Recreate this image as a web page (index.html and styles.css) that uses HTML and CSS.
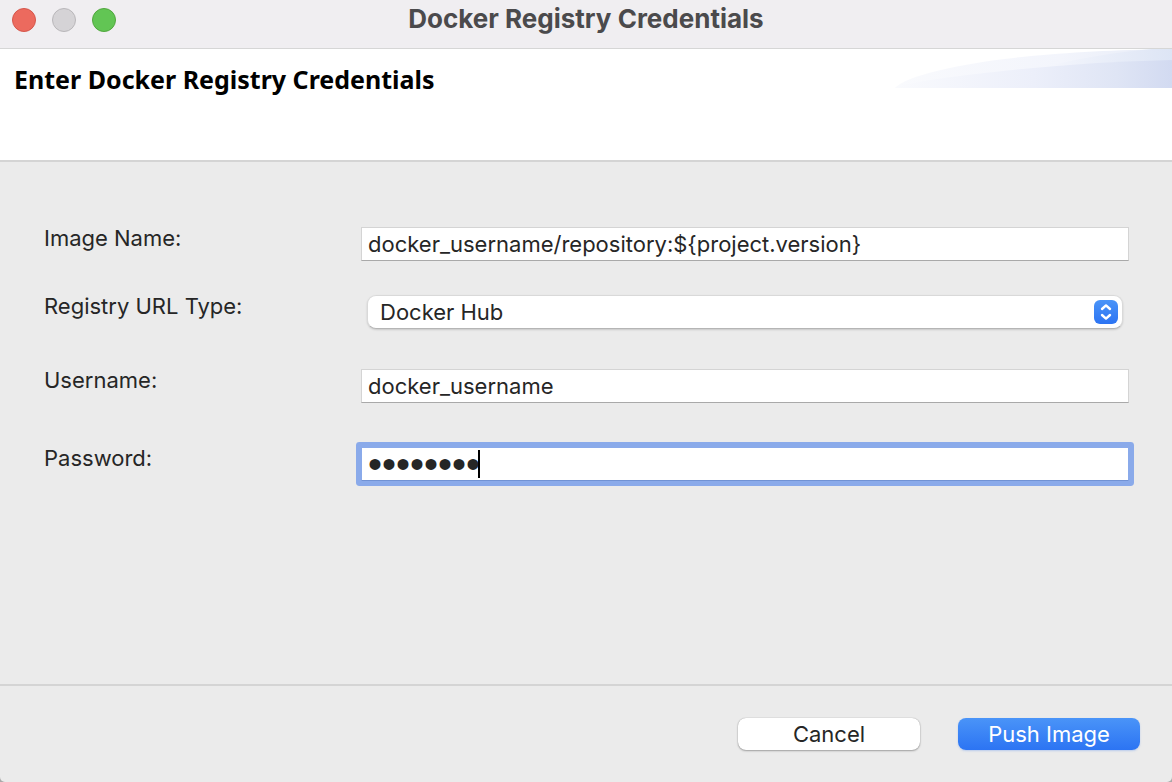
FILE: index.html
```html
<!DOCTYPE html>
<html lang="en">
<head>
<meta charset="utf-8">
<title>Docker Registry Credentials</title>
<link rel="stylesheet" href="styles.css">
</head>
<body>
<form class="dialog">
  <header class="titlebar">
    <div class="lights">
      <button type="button" class="light light-close" aria-label="Close"></button>
      <button type="button" class="light light-minimize" aria-label="Minimize" disabled></button>
      <button type="button" class="light light-zoom" aria-label="Zoom"></button>
    </div>
    <div class="window-title">Docker Registry Credentials</div>
  </header>

  <section class="banner">
    <h1 class="banner-title">Enter Docker Registry Credentials</h1>
    <svg class="banner-art" width="280" height="40" viewBox="0 0 280 40" aria-hidden="true">
      <defs>
        <linearGradient id="swoosh-back" x1="0" x2="1">
          <stop offset="0" stop-color="#f9fafd"/>
          <stop offset="0.6" stop-color="#f3f5fc"/>
          <stop offset="1" stop-color="#e6ebf7"/>
        </linearGradient>
        <linearGradient id="swoosh-mid" x1="0" x2="1">
          <stop offset="0" stop-color="#f3f5fc"/>
          <stop offset="1" stop-color="#dde5f5"/>
        </linearGradient>
        <linearGradient id="swoosh-front" x1="0" x2="1">
          <stop offset="0" stop-color="#f9fafd"/>
          <stop offset="0.5" stop-color="#eceffa"/>
          <stop offset="0.8" stop-color="#dfe5f5"/>
          <stop offset="1" stop-color="#d2daf1"/>
        </linearGradient>
      </defs>
      <path fill="url(#swoosh-back)" d="M3 39C12 27 70 14 130 8C180 3 220 1 280 0V39Z"/>
      <path fill="url(#swoosh-mid)" d="M160 16C195 8 225 3 260 0H280V16Z"/>
      <path fill="url(#swoosh-front)" d="M3 39C20 32 70 26 130 20C180 15 230 12 280 11V39Z"/>
    </svg>
  </section>

  <main class="fields">
    <div class="row">
      <label class="label" for="image-name">Image Name:</label>
      <input class="input" id="image-name" type="text" value="docker_username/repository:${project.version}">
    </div>
    <div class="row row-select">
      <label class="label" for="url-type">Registry URL Type:</label>
      <div class="select-box">
        <select class="select" id="url-type">
          <option>Docker Hub</option>
        </select>
        <svg class="select-icon" width="24" height="24" viewBox="0 0 24 24" aria-hidden="true">
          <defs>
            <linearGradient id="stepper" x2="0" y2="1">
              <stop offset="0" stop-color="#4a94f8"/>
              <stop offset="1" stop-color="#2c74f3"/>
            </linearGradient>
          </defs>
          <rect width="24" height="24" rx="6" fill="url(#stepper)"/>
          <path d="M8 9L12 5.4L16 9M8 15L12 18.6L16 15" fill="none" stroke="#fff" stroke-width="2.4" stroke-linecap="round" stroke-linejoin="round"/>
        </svg>
      </div>
    </div>
    <div class="row row-username">
      <label class="label" for="username">Username:</label>
      <input class="input" id="username" type="text" value="docker_username">
    </div>
    <div class="row">
      <label class="label" for="password">Password:</label>
      <div class="password-box">
        <input class="input input-active" id="password" type="password" value="password">
        <span class="caret"></span>
      </div>
    </div>
  </main>

  <footer class="actions">
    <button type="button" class="button">Cancel</button>
    <button type="submit" class="button button-primary">Push Image</button>
  </footer>
</form>
</body>
</html>
```
FILE: styles.css
```css
* {
  box-sizing: border-box;
}

body {
  margin: 0;
  background: #a9a9a9;
  color: #262626;
  font: 22px/24px Inter, "Liberation Sans", sans-serif;
}

.dialog {
  display: flex;
  flex-direction: column;
  min-height: 100vh;
  background: #ebebeb;
  border-radius: 0 0 5px 5px;
  overflow: hidden;
}

.titlebar {
  display: grid;
  grid-template-columns: 1fr auto 1fr;
  align-items: start;
  padding: 7px 12px 16px;
  background: #f0eef1;
  border-bottom: 1px solid #d6d6d6;
}

.lights {
  display: flex;
  gap: 16px;
  padding-top: 1px;
}

.light {
  width: 24px;
  height: 24px;
  padding: 0;
  border: 1px solid;
  border-radius: 50%;
}

.light-close {
  background: #ec6a5e;
  border-color: #d5564b;
}

.light-minimize {
  background: #d5d3d6;
  border-color: #b9b7ba;
}

.light-zoom {
  background: #62c554;
  border-color: #51a73e;
}

.window-title {
  color: #4b4a4c;
  font-size: 26px;
  font-weight: 700;
}

.banner {
  display: flex;
  justify-content: space-between;
  align-items: flex-start;
  min-height: 113px;
  padding-left: 14px;
  background: #fff;
  border-bottom: 2px solid #d4d4d4;
}

.banner-title {
  margin: 0;
  padding-top: 18px;
  color: #000;
  font: 700 25px/24px "Noto Sans", sans-serif;
}

.banner-art {
  flex: none;
}

.fields {
  flex: 1;
  padding: 65px 43px 40px 44px;
}

.row {
  display: grid;
  grid-template-columns: 317px 1fr;
  align-items: start;
  margin-bottom: 34px;
}

.row-select {
  margin-bottom: 40px;
}

.row-username {
  margin-bottom: 44px;
}

.label {
  line-height: 22px;
}

.input {
  display: block;
  width: 100%;
  height: 34px;
  padding: 0 6px;
  background: #fff;
  border: 1px solid #d4d4d4;
  border-bottom-color: #a9a9a9;
  border-radius: 0;
  color: inherit;
  font: inherit;
  outline: none;
}

.input-active {
  border-color: #8aaaea;
  border-bottom-color: #7192d4;
  border-radius: 1px;
  box-shadow: 0 0 0 5px #8aaaea;
  font: 40px/32px "Liberation Sans", sans-serif;
}

.password-box,
.select-box {
  position: relative;
}

.caret {
  position: absolute;
  top: 3px;
  left: 117px;
  width: 2px;
  height: 28px;
  background: #000;
}

.select-box {
  margin: 0 6px;
}

.select {
  display: block;
  appearance: none;
  width: 100%;
  height: 34px;
  padding: 0 40px 0 12px;
  background: #fff;
  border: 1px solid #d9d9d9;
  border-bottom-color: #b5b5b5;
  border-radius: 9px;
  box-shadow: 0 1px 2px #00000026;
  color: inherit;
  font: inherit;
}

.select-icon {
  position: absolute;
  top: 5px;
  right: 5px;
  pointer-events: none;
}

.actions {
  display: flex;
  justify-content: flex-end;
  gap: 38px;
  padding: 32px;
  border-top: 2px solid #d4d4d4;
}

.button {
  width: 182px;
  height: 32px;
  padding: 0;
  background: #fff;
  border: 0;
  border-radius: 8px;
  box-shadow: 0 0 1px #00000059, 0 1px 2px #0000004d;
  color: inherit;
  font: inherit;
}

.button-primary {
  background: linear-gradient(#4a94f8, #2c74f3);
  box-shadow: 0 1px 2px #2c74f340;
  color: #fff;
}
```
